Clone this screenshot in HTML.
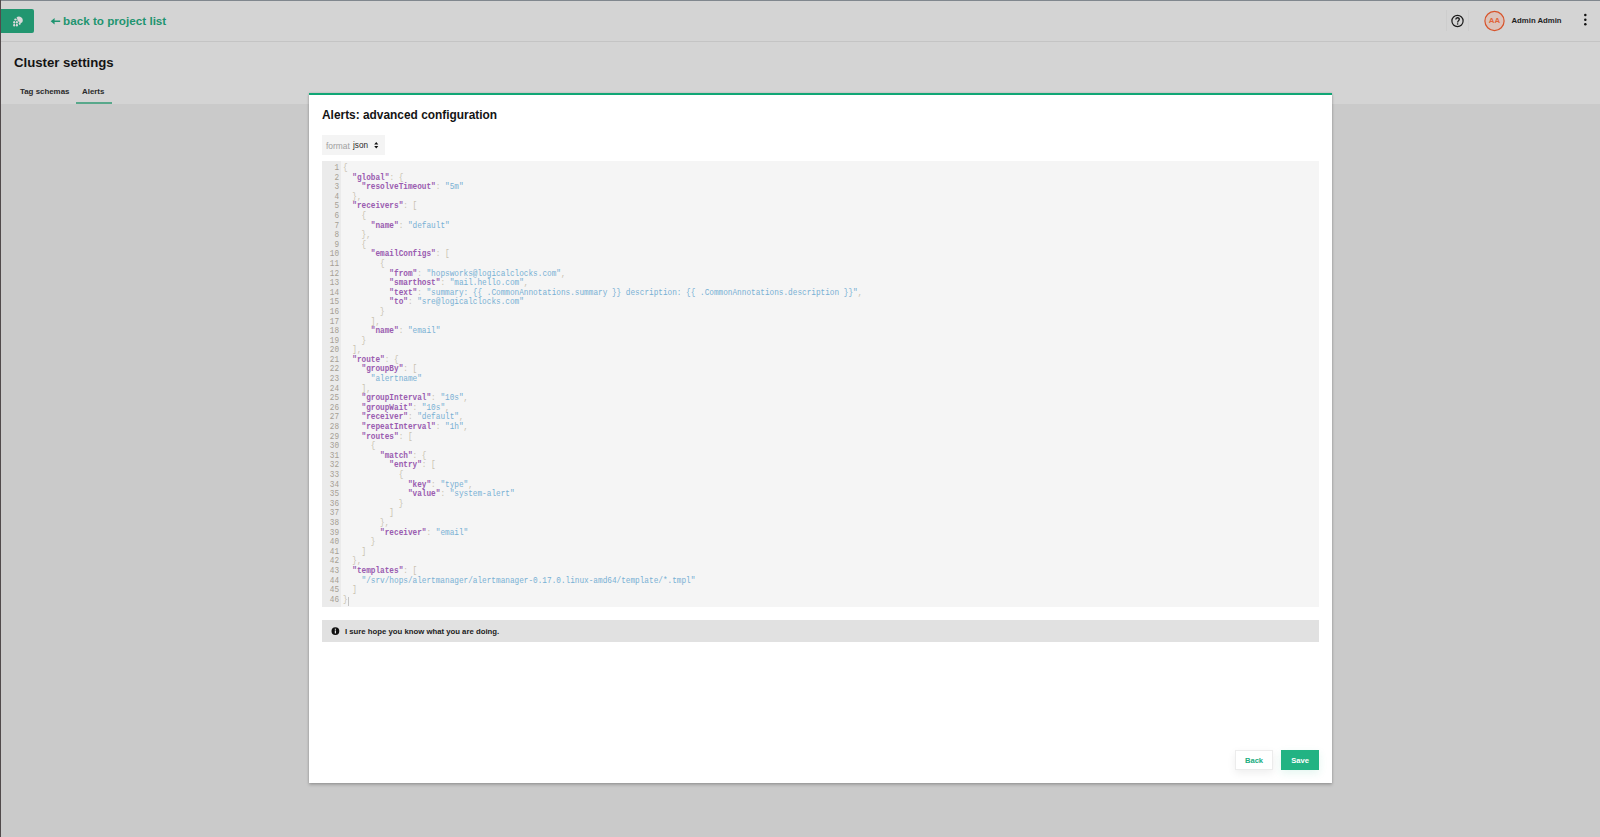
<!DOCTYPE html>
<html><head><meta charset="utf-8">
<style>
*{box-sizing:border-box;margin:0;padding:0}
html,body{width:1600px;height:837px;overflow:hidden}
body{position:relative;background:#cacaca;font-family:"Liberation Sans",sans-serif;color:#1f1f1f}
.abs{position:absolute}
#topb{left:0;top:0;width:1600px;height:1px;background:#80878e}
#leftb{left:0;top:0;width:1px;height:837px;background:#514a4b}
#header{left:1px;top:1px;width:1599px;height:41px;background:#d4d4d4;border-bottom:1px solid #c4c4c4}
#subhead{left:1px;top:42px;width:1599px;height:62px;background:#d4d4d4}
#logo{left:1px;top:8.7px;width:33px;height:24px;background:#229670;border-radius:0 2px 2px 0}
#back{left:63px;top:13.5px;font-size:11.7px;font-weight:bold;color:#1f9470;white-space:nowrap;line-height:14px}
#title{left:14px;top:55px;font-size:13.2px;font-weight:bold;color:#141414;line-height:16px;white-space:nowrap}
.tab{top:86.8px;font-size:7.9px;font-weight:bold;color:#2a2a2a;line-height:10px;white-space:nowrap}
#tabline{left:76px;top:102px;width:36px;height:2px;background:#58a88b}
#modal{left:309px;top:93px;width:1023px;height:690px;background:#fff;border-top:2px solid #10a675;box-shadow:0 0 2px rgba(0,0,0,0.16),0 2px 3px rgba(0,0,0,0.2)}
#mtitle{left:322px;top:108px;font-size:11.9px;font-weight:bold;color:#141414;line-height:14px;white-space:nowrap}
#fmt{left:322px;top:135px;width:63px;height:20px;background:#f4f4f4}
#fmt .l{position:absolute;left:4px;top:6px;font-size:8.4px;color:#a0a0a0;line-height:10px}
#fmt .v{position:absolute;left:31px;top:6px;font-size:8.2px;color:#2a2a2a;line-height:10px}
#editor{left:322px;top:160.5px;width:997px;height:446px;background:#f5f5f5;overflow:hidden}
#gutter{left:0;top:0;width:19px;height:446px;background:#ebebeb}
#nums{position:absolute;right:2.1px;top:3.5px;text-align:right;transform-origin:100% 0;transform:scaleX(0.9225);font-family:"Liberation Mono",monospace;font-size:8.4px;line-height:9.6px;color:#a69f94}
#code{position:absolute;left:21px;top:3.5px;transform-origin:0 0;transform:scaleX(0.9225);font-family:"Liberation Mono",monospace;font-size:8.4px;line-height:9.6px;white-space:pre;color:#c9c0aa}
.k{color:#9a5cb0;font-weight:bold}
.s{color:#78b0d4}
.p{color:#c9c2b0}
#cursor{left:26px;top:433px;width:1px;height:9px;background:#bdbdbd}
#info{left:322px;top:620px;width:997px;height:22px;background:#e1e1e1}
#info .ic{position:absolute;left:9px;top:7px;width:8px;height:8px;border-radius:50%;background:#111}
#info .ic:after{content:"";position:absolute;left:3.2px;top:1.6px;width:1.6px;height:4.8px;background:#e1e1e1}
#info .t{position:absolute;left:23px;top:6.5px;font-size:7.75px;font-weight:bold;color:#1c1c1c;line-height:10px;white-space:nowrap}
.btn{top:750px;height:20px;font-size:7.6px;font-weight:bold;line-height:20px;text-align:center}
#bback{left:1235px;top:749.6px;height:20.6px;width:38px;background:#fff;border:1px solid #ececec;color:#20ad80;box-shadow:0 3px 8px rgba(0,0,0,0.07);line-height:19.5px}
#bsave{left:1281px;width:38px;background:#22b383;color:#fff;box-shadow:0 3px 8px rgba(30,179,130,0.12);line-height:21px}
</style></head><body>
<div class="abs" id="header"></div>
<div class="abs" id="subhead"></div>
<div class="abs" id="topb"></div>
<div class="abs" id="leftb"></div>
<div class="abs" id="logo"></div>
<svg class="abs" style="left:0;top:0" width="70" height="40"><path d="M50.7 21.2 L54.6 17.9 L54.6 20.5 L60.2 20.5 L60.2 21.9 L54.6 21.9 L54.6 24.5 Z" fill="#1f9470"/><g fill="#d9d9d9"><path d="M16.6 17.2 C18.5 15.6 22.6 16.6 22.8 20.0 C22.9 22.2 21.6 23.4 20.2 22.9 C19.5 22.0 18.6 21.6 17.8 21.6 C17.6 20.2 17.2 18.8 16.6 17.2 Z"/><ellipse cx="15.5" cy="19.4" rx="1.3" ry="1.0"/><ellipse cx="14.2" cy="22.2" rx="1.0" ry="1.2"/><ellipse cx="16.9" cy="22.2" rx="1.0" ry="1.2"/><ellipse cx="14.2" cy="25.2" rx="1.0" ry="1.4"/><ellipse cx="16.9" cy="25.2" rx="1.0" ry="1.4"/><ellipse cx="19.7" cy="23.6" rx="1.0" ry="1.3"/></g></svg>
<div class="abs" id="back">back to project list</div>
<div class="abs" style="left:1446px;top:10px;width:1px;height:21px;background:#cdcdcd"></div>
<div class="abs" style="left:1467.5px;top:10px;width:1px;height:21px;background:#cdcdcd"></div>
<svg class="abs" style="left:1440px;top:0" width="160" height="40">
<circle cx="17.5" cy="21" r="5.6" fill="none" stroke="#1a1a1a" stroke-width="1.2"/>
<path d="M15.8 19.5 C15.8 17.2 19.3 17.2 19.3 19.3 C19.3 20.6 17.6 20.7 17.6 22.5" fill="none" stroke="#1a1a1a" stroke-width="1.35"/>
<rect x="16.95" y="23.3" width="1.3" height="1.3" fill="#1a1a1a"/>
<circle cx="54.5" cy="21" r="9.6" fill="#dcc3bb" stroke="#d7542b" stroke-width="1.2"/>
<circle cx="145.3" cy="15" r="1.25" fill="#111"/>
<circle cx="145.3" cy="19.8" r="1.25" fill="#111"/>
<circle cx="145.3" cy="24.3" r="1.25" fill="#111"/>
</svg>
<div class="abs" style="left:1488px;top:16px;width:13px;text-align:center;font-size:7.8px;font-weight:bold;color:#e0643a;line-height:10px">AA</div>
<div class="abs" style="left:1511.5px;top:16px;font-size:7.75px;font-weight:bold;color:#1f1f1f;line-height:10px;white-space:nowrap">Admin Admin</div>
<div class="abs" id="title">Cluster settings</div>
<div class="abs tab" style="left:20px">Tag schemas</div>
<div class="abs tab" style="left:82px">Alerts</div>
<div class="abs" id="tabline"></div>

<div class="abs" id="modal"></div>
<div class="abs" id="mtitle">Alerts: advanced configuration</div>
<div class="abs" id="fmt"><span class="l">format</span><span class="v">json</span><svg style="position:absolute;left:50px;top:5px" width="8" height="10"><path d="M4.25 2 L6.3 4.6 L2.2 4.6 Z M2.2 5.9 L6.3 5.9 L4.25 8.5 Z" fill="#111"/></svg></div>
<div class="abs" id="editor">
<div class="abs" id="gutter"><div id="nums">1<br>2<br>3<br>4<br>5<br>6<br>7<br>8<br>9<br>10<br>11<br>12<br>13<br>14<br>15<br>16<br>17<br>18<br>19<br>20<br>21<br>22<br>23<br>24<br>25<br>26<br>27<br>28<br>29<br>30<br>31<br>32<br>33<br>34<br>35<br>36<br>37<br>38<br>39<br>40<br>41<br>42<br>43<br>44<br>45<br>46</div></div>
<div id="code"><span class="p">{</span>
  <span class="k">&quot;global&quot;</span><span class="p">:</span> <span class="p">{</span>
    <span class="k">&quot;resolveTimeout&quot;</span><span class="p">:</span> <span class="s">&quot;5m&quot;</span>
  <span class="p">}</span><span class="p">,</span>
  <span class="k">&quot;receivers&quot;</span><span class="p">:</span> <span class="p">[</span>
    <span class="p">{</span>
      <span class="k">&quot;name&quot;</span><span class="p">:</span> <span class="s">&quot;default&quot;</span>
    <span class="p">}</span><span class="p">,</span>
    <span class="p">{</span>
      <span class="k">&quot;emailConfigs&quot;</span><span class="p">:</span> <span class="p">[</span>
        <span class="p">{</span>
          <span class="k">&quot;from&quot;</span><span class="p">:</span> <span class="s">&quot;hopsworks@logicalclocks.com&quot;</span><span class="p">,</span>
          <span class="k">&quot;smarthost&quot;</span><span class="p">:</span> <span class="s">&quot;mail.hello.com&quot;</span><span class="p">,</span>
          <span class="k">&quot;text&quot;</span><span class="p">:</span> <span class="s">&quot;summary: {{ .CommonAnnotations.summary }} description: {{ .CommonAnnotations.description }}&quot;</span><span class="p">,</span>
          <span class="k">&quot;to&quot;</span><span class="p">:</span> <span class="s">&quot;sre@logicalclocks.com&quot;</span>
        <span class="p">}</span>
      <span class="p">]</span><span class="p">,</span>
      <span class="k">&quot;name&quot;</span><span class="p">:</span> <span class="s">&quot;email&quot;</span>
    <span class="p">}</span>
  <span class="p">]</span><span class="p">,</span>
  <span class="k">&quot;route&quot;</span><span class="p">:</span> <span class="p">{</span>
    <span class="k">&quot;groupBy&quot;</span><span class="p">:</span> <span class="p">[</span>
      <span class="s">&quot;alertname&quot;</span>
    <span class="p">]</span><span class="p">,</span>
    <span class="k">&quot;groupInterval&quot;</span><span class="p">:</span> <span class="s">&quot;10s&quot;</span><span class="p">,</span>
    <span class="k">&quot;groupWait&quot;</span><span class="p">:</span> <span class="s">&quot;10s&quot;</span><span class="p">,</span>
    <span class="k">&quot;receiver&quot;</span><span class="p">:</span> <span class="s">&quot;default&quot;</span><span class="p">,</span>
    <span class="k">&quot;repeatInterval&quot;</span><span class="p">:</span> <span class="s">&quot;1h&quot;</span><span class="p">,</span>
    <span class="k">&quot;routes&quot;</span><span class="p">:</span> <span class="p">[</span>
      <span class="p">{</span>
        <span class="k">&quot;match&quot;</span><span class="p">:</span> <span class="p">{</span>
          <span class="k">&quot;entry&quot;</span><span class="p">:</span> <span class="p">[</span>
            <span class="p">{</span>
              <span class="k">&quot;key&quot;</span><span class="p">:</span> <span class="s">&quot;type&quot;</span><span class="p">,</span>
              <span class="k">&quot;value&quot;</span><span class="p">:</span> <span class="s">&quot;system-alert&quot;</span>
            <span class="p">}</span>
          <span class="p">]</span>
        <span class="p">}</span><span class="p">,</span>
        <span class="k">&quot;receiver&quot;</span><span class="p">:</span> <span class="s">&quot;email&quot;</span>
      <span class="p">}</span>
    <span class="p">]</span>
  <span class="p">}</span><span class="p">,</span>
  <span class="k">&quot;templates&quot;</span><span class="p">:</span> <span class="p">[</span>
    <span class="s">&quot;/srv/hops/alertmanager/alertmanager-0.17.0.linux-amd64/template/*.tmpl&quot;</span>
  <span class="p">]</span>
<span class="p">}</span></div>
</div>
<div class="abs" style="left:348px;top:597px;width:0.8px;height:9px;background:#c4c4c4"></div>
<div class="abs" id="info"><svg style="position:absolute;left:8.5px;top:7px" width="9" height="9"><circle cx="4.4" cy="4.1" r="3.9" fill="#111"/><rect x="3.8" y="3.4" width="1.2" height="3.0" fill="#e1e1e1"/><rect x="3.8" y="1.7" width="1.2" height="1.1" fill="#e1e1e1"/></svg><div class="t">I sure hope you know what you are doing.</div></div>
<div class="abs btn" id="bback">Back</div>
<div class="abs btn" id="bsave">Save</div>
</body></html>
